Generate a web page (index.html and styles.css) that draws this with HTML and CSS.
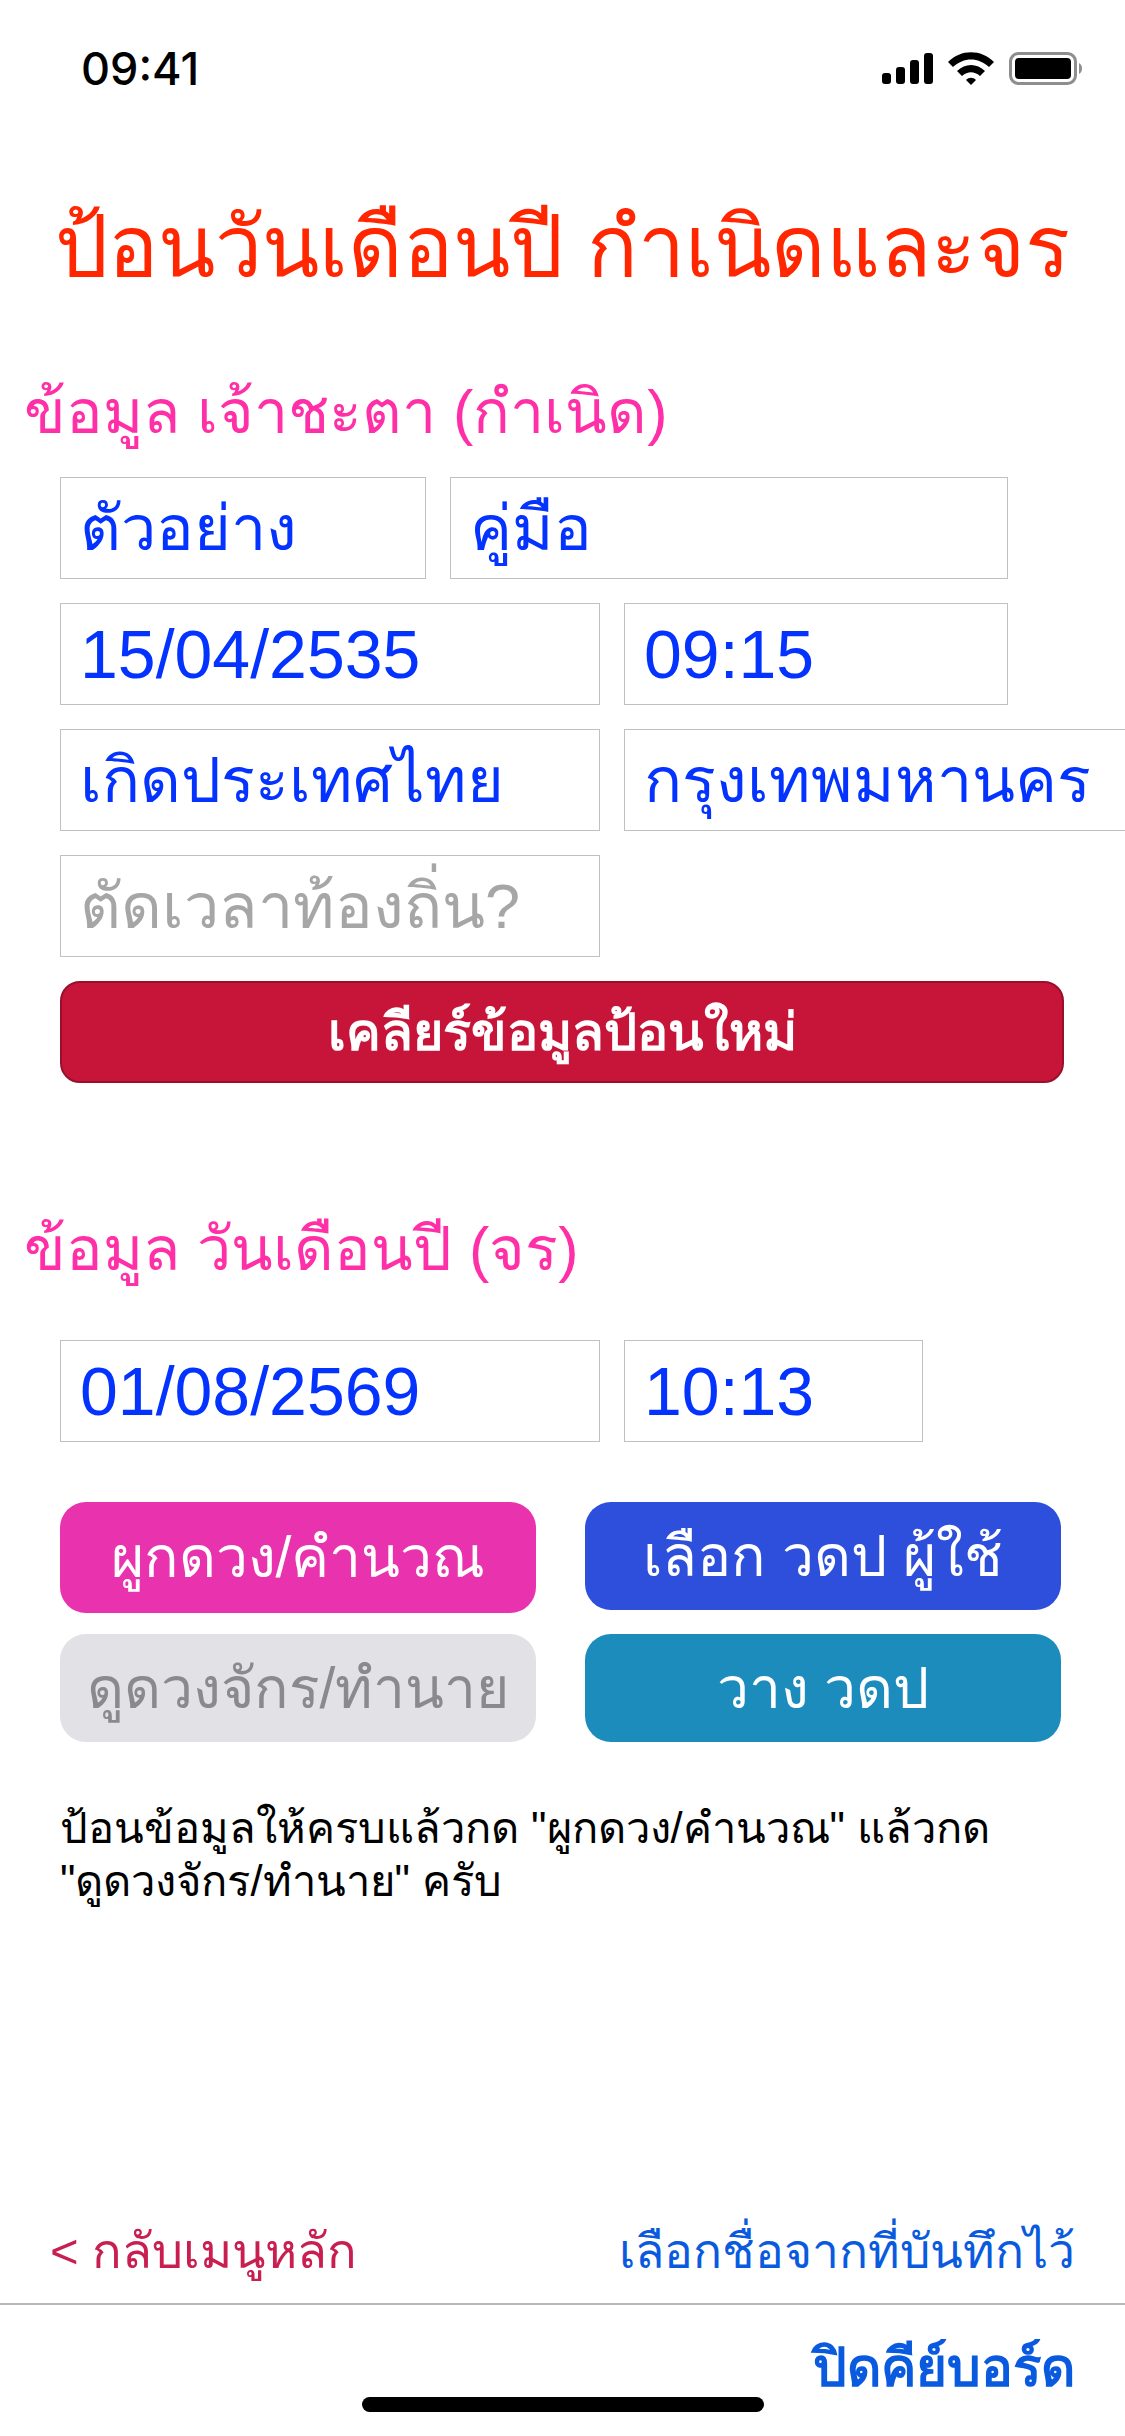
FILE: index.html
```html
<!DOCTYPE html>
<html lang="th">

<head>
    <meta name="viewport" content="width=device-width, initial-scale=1.0" />
    <link rel="stylesheet" href="styles.css">
</head>

<body>
    <div class="screen">
        <!-- Status bar -->
        <div class="status-bar">
            <span class="clock">09:41</span>
            <div class="status-icons">
                <svg class="signal" width="51" height="31" viewBox="0 0 51 31">
                    <rect x="0" y="20" width="9" height="11" rx="3" />
                    <rect x="14" y="14" width="9" height="17" rx="3" />
                    <rect x="28" y="7" width="9" height="24" rx="3" />
                    <rect x="42" y="0" width="9" height="31" rx="3" />
                </svg>
                <svg class="wifi" width="46" height="33" viewBox="0 0 46 33">
                    <path d="M0 10 C13 -3 33 -3 46 10 L41 15 C30 5 16 5 5 15 Z" />
                    <path d="M9 19 C17 11 29 11 37 19 L32 24 C26 19 20 19 14 24 Z" />
                    <path d="M18 28 C21 25 25 25 28 28 L23 33 Z" />
                </svg>
                <svg class="battery" width="73" height="33" viewBox="0 0 73 33">
                    <rect x="1.5" y="1.5" width="65" height="30" rx="8" fill="none" stroke="#8e8e8e" stroke-width="3" />
                    <rect x="6" y="6" width="56" height="21" rx="4" />
                    <path d="M70 11 C72 12 73 14 73 16.5 C73 19 72 21 70 22 Z" fill="#8e8e8e" />
                </svg>
            </div>
        </div>

        <h1 class="page-title">ป้อนวันเดือนปี กำเนิดและจร</h1>

        <!-- Birth data -->
        <h2 class="section-title">ข้อมูล เจ้าชะตา (กำเนิด)</h2>
        <div class="form-rows">
            <div class="row">
                <div class="field w-first">ตัวอย่าง</div>
                <div class="field w-last">คู่มือ</div>
            </div>
            <div class="row">
                <div class="field num w-date">15/04/2535</div>
                <div class="field num w-time">09:15</div>
            </div>
            <div class="row">
                <div class="field w-date">เกิดประเทศไทย</div>
                <div class="field w-city">กรุงเทพมหานคร</div>
            </div>
            <div class="row">
                <div class="field w-date hint">ตัดเวลาท้องถิ่น?</div>
            </div>
            <div class="clear-btn">เคลียร์ข้อมูลป้อนใหม่</div>
        </div>

        <!-- Transit data -->
        <h2 class="section-title second">ข้อมูล วันเดือนปี (จร)</h2>
        <div class="row transit">
            <div class="field num w-date">01/08/2569</div>
            <div class="field num w-short">10:13</div>
        </div>

        <div class="actions">
            <div class="action pink">ผูกดวง/คำนวณ</div>
            <div class="action blue">เลือก วดป ผู้ใช้</div>
            <div class="action grey">ดูดวงจักร/ทำนาย</div>
            <div class="action teal">วาง วดป</div>
        </div>

        <p class="help">ป้อนข้อมูลให้ครบแล้วกด "ผูกดวง/คำนวณ" แล้วกด<br>"ดูดวงจักร/ทำนาย" ครับ</p>

        <!-- Bottom links -->
        <div class="links">
            <span class="back">&lt; กลับเมนูหลัก</span>
            <span class="saved">เลือกชื่อจากที่บันทึกไว้</span>
        </div>
        <div class="keyboard-bar">
            <span class="close-kb">ปิดคีย์บอร์ด</span>
        </div>
        <div class="home-indicator"></div>
    </div>
</body>

</html>
```

FILE: styles.css
```css
* {
    box-sizing: border-box;
}

html,
body {
    margin: 0;
    padding: 0;
    background: #fff;
}

.screen {
    position: relative;
    display: flex;
    flex-direction: column;
    width: 1125px;
    height: 2436px;
    overflow: hidden;
    font-family: "Liberation Sans", "Noto Sans", sans-serif;
}

.status-bar {
    display: flex;
    justify-content: space-between;
    align-items: center;
    height: 33px;
    margin-top: 52px;
    padding: 0 43px 0 81px;
}

.clock {
    font-family: Inter, "Liberation Sans", sans-serif;
    font-size: 45px;
    font-weight: 500;
    line-height: 33px;
    color: #000;
}

.status-icons {
    display: flex;
    align-items: center;
    gap: 15px;
}

.page-title {
    margin: 107px 0 0;
    font-size: 84px;
    font-weight: 400;
    line-height: 110px;
    text-align: center;
    white-space: nowrap;
    color: #ff2600;
}

.section-title {
    margin: 70px 0 0 24px;
    font-size: 61px;
    font-weight: 400;
    line-height: 80px;
    color: #ff2fa8;
}

.section-title.second {
    margin-top: 126px;
}

.form-rows {
    display: flex;
    flex-direction: column;
    gap: 24px;
    margin-top: 25px;
    padding-left: 60px;
}

.row {
    display: flex;
    gap: 24px;
}

.field {
    flex: none;
    height: 102px;
    padding-left: 19px;
    border: 1px solid #c0c0c0;
    font-size: 63px;
    line-height: 100px;
    color: #0433ff;
    white-space: nowrap;
}

.num {
    font-size: 68px;
}

.hint {
    color: #a6a6a6;
}

.w-first { width: 366px; }
.w-last { width: 558px; }
.w-date { width: 540px; }
.w-time { width: 384px; }
.w-city { width: 540px; }
.w-short { width: 299px; }

.clear-btn {
    width: 1004px;
    height: 102px;
    border: 2px solid #9a0f2c;
    border-radius: 20px;
    background: #c7153a;
    font-size: 52px;
    font-weight: 700;
    line-height: 98px;
    text-align: center;
    color: #fff;
}

.transit {
    margin-top: 51px;
    padding-left: 60px;
}

.actions {
    display: grid;
    grid-template-columns: 476px 476px;
    column-gap: 49px;
    row-gap: 21px;
    align-items: start;
    margin: 60px 0 0 60px;
}

.action {
    height: 108px;
    border-radius: 26px;
    font-size: 57px;
    line-height: 108px;
    text-align: center;
    color: #fff;
    white-space: nowrap;
}

.pink {
    height: 111px;
    background: #e832ae;
    line-height: 111px;
}

.blue {
    background: #2d4fdc;
}

.grey {
    background: #e1e1e6;
    color: #8a8a8e;
}

.teal {
    background: #1c8cbd;
}

.help {
    margin: 60px 0 0 60px;
    font-size: 43.5px;
    line-height: 53px;
    color: #000;
}

.links {
    display: flex;
    justify-content: space-between;
    align-items: baseline;
    margin-top: auto;
    padding: 0 50px;
    font-size: 48px;
    line-height: 80px;
}

.back {
    font-size: 49px;
    color: #c81e50;
}

.saved {
    color: #0a5ae0;
}

.keyboard-bar {
    display: flex;
    justify-content: flex-end;
    height: 133px;
    padding: 28px 50px 0;
    border-top: 2px solid #b8b8b8;
    margin-top: 11px;
}

.close-kb {
    font-size: 53px;
    font-weight: 700;
    line-height: 70px;
    color: #0a5ae0;
}

.home-indicator {
    position: absolute;
    left: 362px;
    bottom: 24px;
    width: 402px;
    height: 15px;
    border-radius: 8px;
    background: #000;
}
```
